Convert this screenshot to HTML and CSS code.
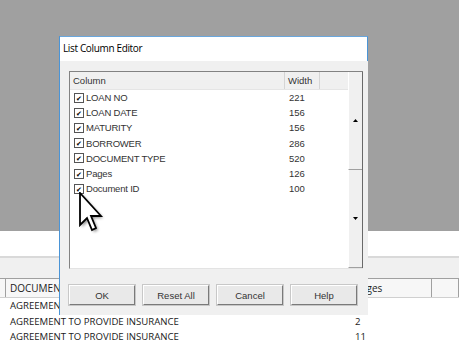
FILE: index.html
```html
<!DOCTYPE html>
<html lang="en">
<head>
    <meta charset="UTF-8">
    <meta name="viewport" content="width=device-width, initial-scale=1.0">
    <title>List Column Editor</title>
    <link rel="stylesheet" href="styles.css">
</head>
<body>
    <div class="desk">
        <div class="backdrop"></div>
        <div class="grid-white"></div>
        <div class="grid-bar"></div>
        <div class="grid-head">
            <span class="gh"></span>
            <span class="gh">DOCUMENT TYPE</span>
            <span class="gh">Pages</span>
            <span class="gh"></span>
        </div>
        <div class="grid-row"><span></span><span>AGREEMENT TO PROVIDE INSURANCE</span><span>1</span></div>
        <div class="grid-row"><span></span><span>AGREEMENT TO PROVIDE INSURANCE</span><span>2</span></div>
        <div class="grid-row"><span></span><span>AGREEMENT TO PROVIDE INSURANCE</span><span>11</span></div>
    </div>

    <div class="dialog">
        <div class="titlebar">List Column Editor</div>
        <div class="dlg-body">
            <div class="listbox">
                <div class="list-main">
                    <div class="list-head">
                        <span class="lh lh-col">Column</span>
                        <span class="lh lh-width">Width</span>
                        <span class="lh lh-fill"></span>
                    </div>
                    <div class="list-rows">
                        <div class="list-row"><span class="chk">&#10004;</span><span class="name">LOAN NO</span><span class="width">221</span></div>
                        <div class="list-row"><span class="chk">&#10004;</span><span class="name">LOAN DATE</span><span class="width">156</span></div>
                        <div class="list-row"><span class="chk">&#10004;</span><span class="name">MATURITY</span><span class="width">156</span></div>
                        <div class="list-row"><span class="chk">&#10004;</span><span class="name">BORROWER</span><span class="width">286</span></div>
                        <div class="list-row"><span class="chk">&#10004;</span><span class="name">DOCUMENT TYPE</span><span class="width">520</span></div>
                        <div class="list-row"><span class="chk">&#10004;</span><span class="name">Pages</span><span class="width">126</span></div>
                        <div class="list-row"><span class="chk">&#10004;</span><span class="name">Document ID</span><span class="width">100</span></div>
                    </div>
                </div>
                <div class="vscroll">
                    <div class="sb-btn">
                        <svg width="5" height="3" viewBox="0 0 5 3"><path d="M0 3 L2.5 0 L5 3 Z" fill="#000"/></svg>
                    </div>
                    <div class="sb-btn">
                        <svg width="5" height="3" viewBox="0 0 5 3"><path d="M0 0 L5 0 L2.5 3 Z" fill="#000"/></svg>
                    </div>
                </div>
            </div>
            <div class="buttons">
                <button>OK</button>
                <button>Reset All</button>
                <button>Cancel</button>
                <button>Help</button>
            </div>
        </div>
    </div>

    <svg class="cursor" width="30" height="44" viewBox="0 0 30 44">
        <defs>
            <filter id="shadow" x="-30%" y="-30%" width="160%" height="160%">
                <feGaussianBlur stdDeviation="1.8"/>
            </filter>
        </defs>
        <path d="M3 3 L3 35 L10 28 L15 40 L19 38 L14 26 L24 26 Z" fill="#000" opacity="0.45" filter="url(#shadow)"/>
        <path d="M1 1 L1 33 L8 26 L13 38 L17 36 L12 24 L22 24 Z" fill="#fff" stroke="#000" stroke-width="1.8" stroke-linejoin="miter"/>
    </svg>
</body>
</html>
```

FILE: styles.css
```css
body {
    margin: 0;
    padding: 0;
    width: 459px;
    height: 345px;
    overflow: hidden;
    font-family: "Liberation Sans", Arial, sans-serif;
    background-color: #fff;
}
.desk {
    display: flex;
    flex-direction: column;
}
.backdrop {
    height: 231px;
    background-color: #a0a0a0;
}
.grid-white {
    height: 25px;
    background-color: #fff;
}
.grid-bar {
    height: 20px;
    background-color: #f0f0f0;
    border-top: 2px solid #d9d9d9;
}
.grid-head,
.grid-row {
    display: grid;
    grid-template-columns: 5px 345px 82px 1fr;
}
.grid-head {
    height: 18px;
    border-top: 1px solid #a0a0a0;
    border-bottom: 1px solid #d0d0d0;
    background-color: #f7f7f7;
}
.gh {
    border-right: 1px solid #a0a0a0;
    padding-left: 5px;
    font-family: "Open Sans", sans-serif;
    font-size: 10px;
    line-height: 18px;
    color: #222;
}
.grid-row {
    height: 15.5px;
    font-family: "Open Sans", sans-serif;
    font-size: 9.6px;
    line-height: 15.5px;
    color: #1a1a1a;
}
.grid-row span {
    padding-left: 5px;
}
.dialog {
    position: absolute;
    left: 59px;
    top: 36px;
    width: 309px;
    height: 279px;
    display: flex;
    flex-direction: column;
    background-color: #f0f0f0;
    border-left: 1px solid #4a94d6;
    box-sizing: border-box;
}
.titlebar {
    height: 25px;
    background-color: #fff;
    border-top: 1px solid #6aa7dd;
    border-right: 1px solid #4a94d6;
    box-sizing: border-box;
    padding-left: 3px;
    font-family: "Open Sans", sans-serif;
    font-size: 10px;
    letter-spacing: -0.35px;
    line-height: 23px;
    color: #000;
}
.dlg-body {
    padding: 10px 5px 10px 9px;
    display: flex;
    flex-direction: column;
    gap: 16px;
}
.listbox {
    display: flex;
    width: 294px;
    height: 198px;
    box-sizing: border-box;
    border-top: 1px solid #828282;
    border-left: 1px solid #828282;
    border-bottom: 1px solid #e3e3e3;
    background-color: #fff;
}
.list-main {
    flex: 1;
    display: flex;
    flex-direction: column;
}
.list-head {
    display: flex;
    height: 17px;
    background-color: #f0f0f0;
    border-bottom: 1px solid #e5e5e5;
}
.lh {
    font-size: 9.5px;
    line-height: 17px;
    color: #333;
    padding-left: 3px;
    box-sizing: border-box;
}
.lh-col {
    width: 215px;
    border-right: 1px solid #d5d5d5;
}
.lh-width {
    width: 35px;
    border-right: 1px solid #d5d5d5;
}
.lh-fill {
    flex: 1;
}
.list-row {
    display: flex;
    align-items: center;
    height: 15.2px;
    font-size: 9.5px;
    color: #333;
}
.chk {
    width: 10px;
    height: 10px;
    margin-left: 4px;
    border: 1px solid #555;
    box-sizing: border-box;
    font-size: 7px;
    line-height: 9px;
    text-align: center;
    color: #000;
    background-color: #fff;
}
.name {
    width: 199px;
    padding-left: 2px;
    letter-spacing: -0.2px;
}
.width {
    padding-left: 4px;
}
.vscroll {
    width: 15px;
    display: flex;
    flex-direction: column;
    border-right: 1px solid #696969;
    box-sizing: border-box;
    background-color: #f0f0f0;
}
.sb-btn {
    flex: 1;
    display: flex;
    align-items: center;
    justify-content: center;
    border-bottom: 1px solid #a0a0a0;
    border-left: 1px solid #fff;
}
.buttons {
    display: flex;
    justify-content: space-between;
    width: 288px;
}
button {
    width: 66px;
    height: 20px;
    padding: 0;
    font-family: "Liberation Sans", Arial, sans-serif;
    font-size: 9.5px;
    color: #333;
    background-color: #e9e9e9;
    border: 1px solid #fff;
    border-right-color: #7a7a7a;
    border-bottom-color: #7a7a7a;
    box-shadow: 0 0 0 1px #c8c8c8;
}
.cursor {
    position: absolute;
    left: 79px;
    top: 192px;
}
```
